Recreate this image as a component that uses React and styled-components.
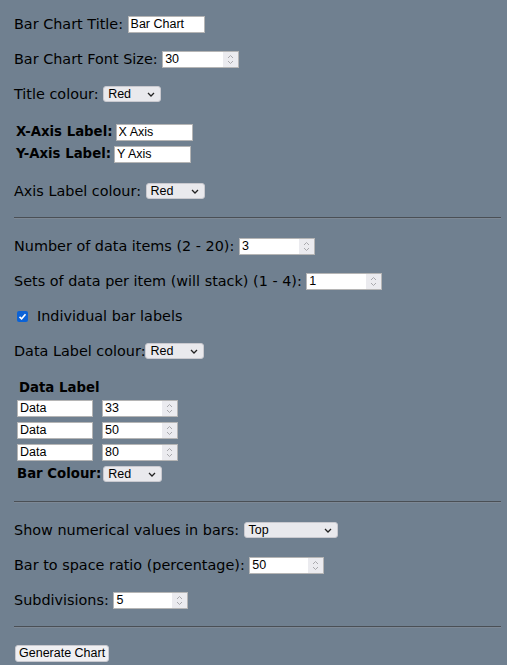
import React from "react";
import styled, { createGlobalStyle } from "styled-components";

const Global = createGlobalStyle`
  html, body { margin: 0; padding: 0; background: #708090; }
  body { font-family: "DejaVu Sans", Verdana, sans-serif; font-size: 14.4px; color: #000; }
`;

const Page = styled.form`
  padding: 15px 6px 0 14px;
  display: flex;
  flex-direction: column;
`;

const Section = styled.div`
  display: flex;
  flex-direction: column;
  gap: 17px;
`;

const Row = styled.div`
  display: flex;
  align-items: center;
  height: 18px;
  white-space: pre;
  line-height: 18px;
`;

const Group = styled.div`
  display: flex;
  flex-direction: column;
  gap: 4px;
  margin: ${(p) => p.$margin || "0"};
  padding-left: ${(p) => p.$indent || "0"};
`;

const BoldLabel = styled.span`
  font-weight: bold;
  font-size: 13.3px;
  margin-right: ${(p) => p.$gap || "0"};
`;

const Rule = styled.hr`
  margin: ${(p) => p.$margin};
  border: none;
  border-top: 1px solid #4a4f55;
  border-bottom: 1px solid #7d8895;
  height: 0;
  width: 100%;
`;

const fieldFont = `
  font-family: "Liberation Sans", Arial, sans-serif;
  font-size: 12.5px;
  color: #000;
`;

const TextInput = styled.input.attrs({ type: "text" })`
  ${fieldFont}
  box-sizing: border-box;
  width: ${(p) => p.$w || 77}px;
  height: 17px;
  border: 1px solid #b5b5b5;
  background: #fff;
  padding: 0 2px;
  margin: 0;
  outline: none;
`;

const NumberBox = styled.span`
  display: inline-flex;
  box-sizing: border-box;
  width: ${(p) => p.$w || 77}px;
  height: 17px;
  border: 1px solid #b5b5b5;
  background: #fff;
`;

const NumberField = styled.input.attrs({ type: "text" })`
  ${fieldFont}
  flex: 1;
  min-width: 0;
  border: none;
  padding: 0 2px;
  margin: 0;
  background: transparent;
  outline: none;
`;

const Spinner = styled.span`
  width: 15px;
  background: #ebebef;
  display: flex;
  align-items: center;
  justify-content: center;
`;

const SelectBox = styled.span`
  display: inline-flex;
  align-items: center;
  justify-content: space-between;
  box-sizing: border-box;
  width: ${(p) => p.$w || 58}px;
  height: 16px;
  border: 1px solid #c9c9cf;
  border-radius: 3px;
  background: #e9e9ed;
  padding: 0 5px 0 4px;
  ${fieldFont}
  line-height: 14px;
`;

const Check = styled.span`
  display: inline-flex;
  align-items: center;
  justify-content: center;
  width: 11px;
  height: 11px;
  border-radius: 2px;
  background: #0b62d6;
  margin: 0 9px 0 3px;
`;

const Header = styled.div`
  font-weight: bold;
  font-size: 13.3px;
  height: 15px;
  line-height: 15px;
  padding-left: 2px;
`;

const DataRow = styled.div`
  display: flex;
  align-items: center;
  gap: 9px;
  height: 18px;
`;

const Button = styled.button`
  ${fieldFont}
  height: 17px;
  line-height: 15px;
  padding: 0 3px;
  margin-left: 1px;
  border: 1px solid #c9c9cf;
  border-radius: 3px;
  background: #efeff2;
  align-self: flex-start;
`;

const SpinIcon = () => (
  <svg width="7" height="11" viewBox="0 0 7 11">
    <path d="M1 4 L3.5 1.5 L6 4 M1 7 L3.5 9.5 L6 7" fill="none" stroke="#a9a9ad" strokeWidth="1" />
  </svg>
);

const Chevron = () => (
  <svg width="8" height="5" viewBox="0 0 8 5">
    <path d="M1 1 L4 4 L7 1" fill="none" stroke="#222" strokeWidth="1.3" />
  </svg>
);

const Num = ({ value, w }) => (
  <NumberBox $w={w}>
    <NumberField defaultValue={value} />
    <Spinner>
      <SpinIcon />
    </Spinner>
  </NumberBox>
);

const Sel = ({ value, w }) => (
  <SelectBox $w={w}>
    <span>{value}</span>
    <Chevron />
  </SelectBox>
);

export default function App() {
  return (
    <>
      <Global />
      <Page onSubmit={(e) => e.preventDefault()}>
        <Section>
          <Row>
            Bar Chart Title: <TextInput defaultValue="Bar Chart" />
          </Row>
          <Row>
            Bar Chart Font Size: <Num value="30" />
          </Row>
          <Row>
            Title colour: <Sel value="Red" />
          </Row>
          <Group $margin="3px 0 2px" $indent="2px">
            <Row>
              <BoldLabel $gap="3px">X-Axis Label:</BoldLabel>
              <TextInput defaultValue="X Axis" />
            </Row>
            <Row>
              <BoldLabel $gap="3px">Y-Axis Label:</BoldLabel>
              <TextInput defaultValue="Y Axis" />
            </Row>
          </Group>
          <Row>
            Axis Label colour: <Sel value="Red" w={59} />
          </Row>
        </Section>
        <Rule $margin="17px 0 18px" />
        <Section>
          <Row>
            Number of data items (2 - 20): <Num value="3" w={76} />
          </Row>
          <Row>
            Sets of data per item (will stack) (1 - 4): <Num value="1" w={76} />
          </Row>
          <Row>
            <Check>
              <svg width="9" height="9" viewBox="0 0 9 9">
                <path d="M1.5 4.8 L3.6 6.8 L7.5 2.2" fill="none" stroke="#fff" strokeWidth="1.6" />
              </svg>
            </Check>
            Individual bar labels
          </Row>
          <Row>
            Data Label colour:<Sel value="Red" w={59} />
          </Row>
          <Group $margin="3px 0 0" $indent="3px">
            <Header>Data Label</Header>
            {["33", "50", "80"].map((v, i) => (
              <DataRow key={i}>
                <TextInput defaultValue="Data" $w={76} />
                <Num value={v} w={76} />
              </DataRow>
            ))}
            <Row>
              <BoldLabel $gap="2px">Bar Colour:</BoldLabel>
              <Sel value="Red" w={59} />
            </Row>
          </Group>
        </Section>
        <Rule $margin="18px 0 18px" />
        <Section>
          <Row>
            Show numerical values in bars: <Sel value="Top" w={94} />
          </Row>
          <Row>
            Bar to space ratio (percentage): <Num value="50" w={75} />
          </Row>
          <Row>
            Subdivisions: <Num value="5" w={75} />
          </Row>
        </Section>
        <Rule $margin="17px 0 17px" />
        <Button type="button">Generate Chart</Button>
      </Page>
    </>
  );
}
